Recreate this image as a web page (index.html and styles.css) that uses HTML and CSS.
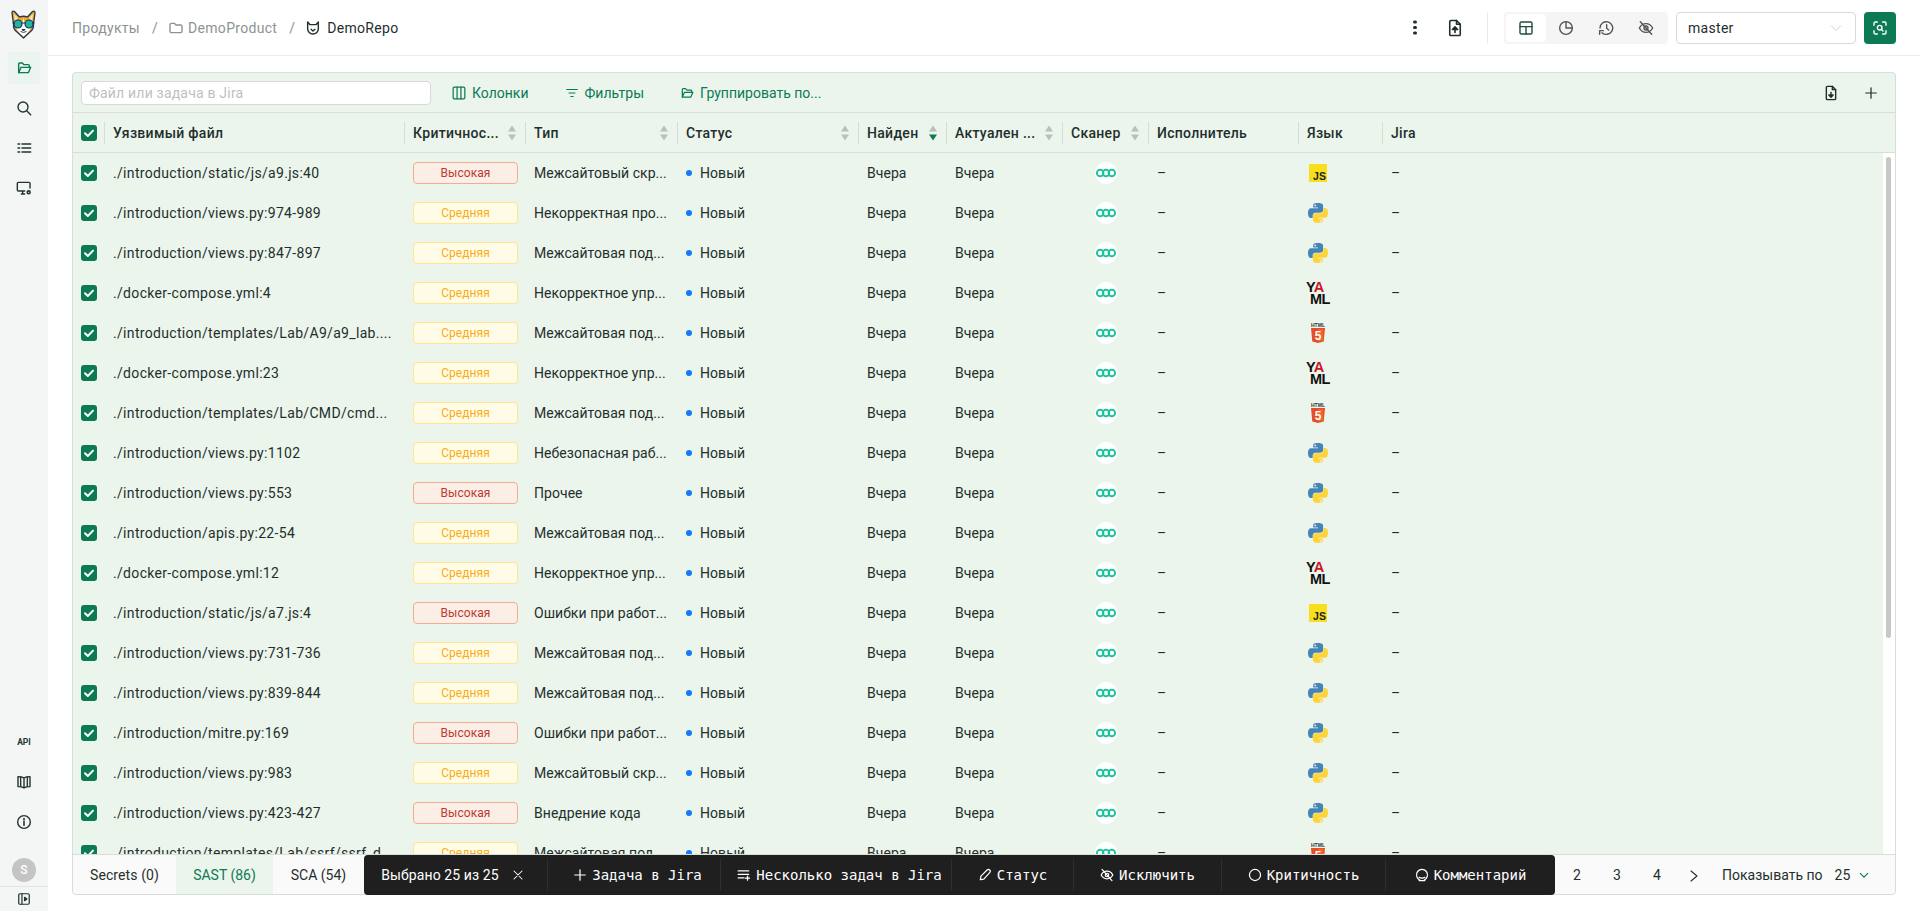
FILE: index.html
```html
<!DOCTYPE html>
<html lang="ru">
<head>
<meta charset="utf-8">
<title>DemoRepo</title>
<link rel="stylesheet" href="styles.css">
</head>
<body>
<svg class="defs" aria-hidden="true">
  <symbol id="i-check" viewBox="0 0 16 16"><path d="M4 8.300l2.800 2.700L12 5.600" fill="none" stroke="#fff" stroke-width="2" stroke-linecap="round" stroke-linejoin="round"/></symbol>
  <symbol id="i-scan" viewBox="0 0 24 24"><circle cx="12" cy="12" r="11" fill="#fff"/><g fill="none" stroke="#20c49b" stroke-width="1.900"><circle cx="6.200" cy="12" r="3.300"/><circle cx="12" cy="12" r="3.300"/><circle cx="17.800" cy="12" r="3.300"/></g></symbol>
  <symbol id="i-py" viewBox="0 0 24 24"><path fill="#4584b6" d="M11.900 2C6.900 2 7.200 4.200 7.200 4.200v2.300h4.800v.7H5.300S2 6.800 2 12s2.900 5 2.900 5h1.800v-2.400s-.1-2.900 2.900-2.900h4.800s2.700 0 2.700-2.600V4.700S17.500 2 11.900 2zM9.300 3.500a.9.9 0 1 1 0 1.800.9.9 0 0 1 0-1.800z"/><path fill="#ffd43b" d="M12.100 22c5 0 4.700-2.200 4.700-2.200v-2.300H12v-.7h6.700S22 17.200 22 12s-2.900-5-2.900-5h-1.800v2.400s.1 2.900-2.900 2.900H9.600s-2.700 0-2.700 2.600v4.400S6.500 22 12.100 22zm2.600-1.500a.9.9 0 1 1 0-1.800.9.9 0 0 1 0 1.800z"/></symbol>
  <symbol id="i-shield" viewBox="0 0 24 24"><path fill="#e44d26" d="M5 7h14l-1.300 13.500L12 22l-5.700-1.500z"/><path fill="#f16529" d="M12 8.100v12.800l4.600-1.200 1.100-11.600z"/></symbol>
  <symbol id="i-sort" viewBox="0 0 10 16"><path d="M5 0.500l4 6H1z" fill="#b9c0bb"/><path d="M5 15.500l-4-6h8z" fill="#b9c0bb"/></symbol>
  <symbol id="i-sort-d" viewBox="0 0 10 16"><path d="M5 0.500l4 6H1z" fill="#b9c0bb"/><path d="M5 15.500l-4-6h8z" fill="#0b7a55"/></symbol>
  <symbol id="i-book" viewBox="0 0 24 24"><path d="M12 6c-2-1.500-5-2-9-2v15c4 0 7 .5 9 2 2-1.500 5-2 9-2V4c-4 0-7 .5-9 2zM12 6v15M7 4.300v15M17 4.300v15"/></symbol>
  <symbol id="i-folder-open" viewBox="0 0 24 24"><path d="M4 19V6a1.500 1.500 0 0 1 1.500-1.500h4l2.500 2.500h6.500A1.500 1.500 0 0 1 20 8.500V11"/><path d="M4 19h14.500L22 11H7.500z"/></symbol>
  <symbol id="i-folder" viewBox="0 0 24 24"><path d="M3 7a2 2 0 0 1 2-2h4.500l2.500 2.500h7a2 2 0 0 1 2 2V17a2 2 0 0 1-2 2H5a2 2 0 0 1-2-2z"/></symbol>
  <symbol id="i-search" viewBox="0 0 24 24"><circle cx="10.500" cy="10.500" r="7.500"/><path d="M16 16l6 6"/></symbol>
  <symbol id="i-list" viewBox="0 0 24 24"><path d="M3 6h2.500M3 12h2.500M3 18h2.500M9 6h13M9 12h13M9 18h13" stroke-width="2.200"/></symbol>
  <symbol id="i-mon" viewBox="0 0 24 24"><path d="M21 12V5a1.500 1.500 0 0 0-1.500-1.500h-16A1.500 1.500 0 0 0 2 5v10a1.500 1.500 0 0 0 1.500 1.500H13M8 21h5M10 16.500V21"/><circle cx="19" cy="18.500" r="2.200" stroke-width="2.400"/></symbol>
  <symbol id="i-info" viewBox="0 0 24 24"><circle cx="12" cy="12" r="9.500"/><path d="M12 11v6M12 7v1.500" stroke-width="2.400"/></symbol>
  <symbol id="i-side" viewBox="0 0 24 24"><rect x="3" y="3" width="18" height="18" rx="2"/><path d="M8.500 3v18"/><path d="M13 9l4 3-4 3z" fill="currentColor"/></symbol>
  <symbol id="i-file-up" viewBox="0 0 24 24"><path d="M14 2H6.500A1.500 1.500 0 0 0 5 3.500v17A1.500 1.500 0 0 0 6.500 22h11a1.500 1.500 0 0 0 1.500-1.500V7z"/><path d="M14 2v5h5"/><path d="M12 18v-6" stroke-width="2.200"/><path d="M8.500 14l3.500-3.500 3.500 3.500z" fill="currentColor"/></symbol>
  <symbol id="i-file-down" viewBox="0 0 24 24"><path d="M14 2H6.500A1.500 1.500 0 0 0 5 3.500v17A1.500 1.500 0 0 0 6.500 22h11a1.500 1.500 0 0 0 1.500-1.500V7z"/><path d="M14 2v5h5"/><path d="M12 11v5" stroke-width="2"/><path d="M8.800 15l3.200 3.200 3.200-3.200z" fill="currentColor"/></symbol>
  <symbol id="i-table" viewBox="0 0 24 24"><rect x="3" y="3" width="18" height="18" rx="2"/><path d="M3 10h18M12 10v11"/></symbol>
  <symbol id="i-pie" viewBox="0 0 24 24"><circle cx="12" cy="12" r="9.500"/><path d="M12 2.500V12h9.500"/></symbol>
  <symbol id="i-hist" viewBox="0 0 24 24"><path d="M3 12a9.500 9.500 0 1 1 3 7"/><path d="M2.500 21.500v-5.500H8"/><path d="M13 7v5.500l3 2.500"/></symbol>
  <symbol id="i-eye-off" viewBox="0 0 24 24"><path d="M2 12s3.500-6.500 10-6.500S22 12 22 12s-3.500 6.500-10 6.500S2 12 2 12z"/><circle cx="12" cy="12" r="3"/><path d="M3.500 2.500l17 19"/></symbol>
  <symbol id="i-chev" viewBox="0 0 24 24"><path d="M3 8l9 9 9-9"/></symbol>
  <symbol id="i-chev-r" viewBox="0 0 24 24"><path d="M6 2l12 10L6 22"/></symbol>
  <symbol id="i-scanbtn" viewBox="0 0 24 24"><path d="M3 8V5a2 2 0 0 1 2-2h3M16 3h3a2 2 0 0 1 2 2v3M21 16v3a2 2 0 0 1-2 2h-3M8 21H5a2 2 0 0 1-2-2v-3"/><circle cx="11.500" cy="11.500" r="3.500"/><path d="M14 14l2.500 2.500"/></symbol>
  <symbol id="i-cols" viewBox="0 0 24 24"><rect x="2" y="2" width="20" height="20" rx="2"/><path d="M8.700 2v20M15.300 2v20"/></symbol>
  <symbol id="i-filter" viewBox="0 0 24 24"><path d="M3 6h18M7 12h10M10 18h4"/></symbol>
  <symbol id="i-plus" viewBox="0 0 24 24"><path d="M12 3v18M3 12h18"/></symbol>
  <symbol id="i-x" viewBox="0 0 24 24"><path d="M4 4l16 16M20 4L4 20"/></symbol>
  <symbol id="i-multi" viewBox="0 0 24 24"><path d="M2 5h18M2 11h18M2 17h10M18 14v7M14.500 17.500h7"/></symbol>
  <symbol id="i-pen" viewBox="0 0 24 24"><path d="M4 20l1-6L15.500 3.500a3 3 0 0 1 4.500 4.500L10 19z"/></symbol>
  <symbol id="i-circle" viewBox="0 0 24 24"><circle cx="12" cy="12" r="9.500"/></symbol>
  <symbol id="i-comment" viewBox="0 0 24 24"><path d="M8 20.500A9.500 9.500 0 1 1 16 20.500"/><path d="M7 16c2.500 2 7.500 2 10 0"/><path d="M7 21.500h10"/></symbol>
  <symbol id="i-repo" viewBox="0 0 24 24"><path d="M4 3l3.500 4h9L20 3v10c0 4.500-3.500 8-8 8s-8-3.500-8-8z"/><path d="M9 14l3 2.500 3-2.500"/></symbol>
</svg>

<div class="app">
  <aside class="side">
    <div class="logo">
      <svg class="logo-svg" viewBox="0 0 27 29">
        <path d="M3.500 14L2 3Q2 .5 4.500 1.500L9.500 7Q13.500 5.500 17.500 7L22.500 1.500Q25 .5 25 3L23.500 14Q24 19 20 22L13.500 28 7 22Q3 19 3.500 14z" fill="#f6a623" stroke="#1c3a5e" stroke-width="1.300" stroke-linejoin="round"/>
        <path d="M4 4l4 4-3 4zM23 4l-4 4 3 4z" fill="#fbe3c0"/>
        <path d="M13.500 8L15 15l6 2.500q-1 3.500-7.500 9Q7 21 6 17.500L12 15z" fill="#fff"/>
        <circle cx="8" cy="14" r="4" fill="#1fb5a6" stroke="#17304f" stroke-width="1.100"/>
        <circle cx="19" cy="14" r="4" fill="#1fb5a6" stroke="#17304f" stroke-width="1.100"/>
        <path d="M11.500 13h4M2.500 13h2M22.500 13h2" stroke="#17304f" stroke-width="1.100"/>
        <path d="M12 19.500h3l-1.500 1.500z" fill="#17304f" stroke="#17304f"/>
        <path d="M10.500 21.500q3 1.800 6 0" fill="none" stroke="#17304f" stroke-width=".9"/>
      </svg>
    </div>
    <nav class="nav">
      <a class="nav-i nav-on"><svg class="ic ic16"><use href="#i-folder-open"/></svg></a>
      <a class="nav-i"><svg class="ic ic16"><use href="#i-search"/></svg></a>
      <a class="nav-i"><svg class="ic ic16"><use href="#i-list"/></svg></a>
      <a class="nav-i"><svg class="ic ic16"><use href="#i-mon"/></svg></a>
    </nav>
    <nav class="nav nav-b">
      <a class="nav-i api">API</a>
      <a class="nav-i"><svg class="ic ic16"><use href="#i-book"/></svg></a>
      <a class="nav-i"><svg class="ic ic16"><use href="#i-info"/></svg></a>
    </nav>
    <div class="avatar">S</div>
    <div class="collapse"><svg class="ic ic14"><use href="#i-side"/></svg></div>
  </aside>

  <div class="page">
    <header class="top">
      <div class="crumbs">
        <span class="crumb">Продукты</span>
        <span class="sep">/</span>
        <span class="crumb"><svg class="ic ic16"><use href="#i-folder"/></svg>DemoProduct</span>
        <span class="sep">/</span>
        <span class="crumb crumb-on"><svg class="ic ic16"><use href="#i-repo"/></svg>DemoRepo</span>
      </div>
      <div class="top-r">
        <button class="ib"><span class="kebab"></span></button>
        <button class="ib"><svg class="ic ic18"><use href="#i-file-up"/></svg></button>
        <span class="vr"></span>
        <div class="seg">
          <span class="seg-i seg-on"><svg class="ic ic16"><use href="#i-table"/></svg></span>
          <span class="seg-i"><svg class="ic ic16"><use href="#i-pie"/></svg></span>
          <span class="seg-i"><svg class="ic ic16"><use href="#i-hist"/></svg></span>
          <span class="seg-i"><svg class="ic ic16"><use href="#i-eye-off"/></svg></span>
        </div>
        <div class="select">master<svg class="ic ic12"><use href="#i-chev"/></svg></div>
        <button class="go"><svg class="ic ic16"><use href="#i-scanbtn"/></svg></button>
      </div>
    </header>

    <main class="main">
      <section class="card">
        <div class="tools">
          <input class="search" placeholder="Файл или задача в Jira">
          <span class="tb"><svg class="ic ic14"><use href="#i-cols"/></svg>Колонки</span>
          <span class="tb"><svg class="ic ic14"><use href="#i-filter"/></svg>Фильтры</span>
          <span class="tb"><svg class="ic ic14"><use href="#i-folder-open"/></svg>Группировать по...</span>
          <span class="tools-r">
            <button class="ib"><svg class="ic ic16"><use href="#i-file-down"/></svg></button>
            <button class="ib"><svg class="ic ic14"><use href="#i-plus"/></svg></button>
          </span>
        </div>

        <div class="grid thead">
          <span class="cb-c"><span class="cb"><svg><use href="#i-check"/></svg></span></span>
          <span class="th">Уязвимый файл</span>
          <span class="th">Критичнос...<svg class="sort"><use href="#i-sort"/></svg></span>
          <span class="th">Тип<svg class="sort"><use href="#i-sort"/></svg></span>
          <span class="th">Статус<svg class="sort"><use href="#i-sort"/></svg></span>
          <span class="th">Найден<svg class="sort"><use href="#i-sort-d"/></svg></span>
          <span class="th">Актуален ...<svg class="sort"><use href="#i-sort"/></svg></span>
          <span class="th">Сканер<svg class="sort"><use href="#i-sort"/></svg></span>
          <span class="th">Исполнитель</span>
          <span class="th">Язык</span>
          <span class="th">Jira</span>
        </div>

        <div class="tbody">
          <div class="rows">
            <div class="grid row"><span class="cb-c"><span class="cb"><svg><use href="#i-check"/></svg></span></span><span class="td td-f">./introduction/static/js/a9.js:40</span><span class="td"><span class="sev high">Высокая</span></span><span class="td">Межсайтовый скр...</span><span class="td"><i class="dot"></i>Новый</span><span class="td">Вчера</span><span class="td">Вчера</span><span class="td td-c"><svg class="logo24"><use href="#i-scan"/></svg></span><span class="td">–</span><span class="td td-l"><span class="lg-js">JS</span></span><span class="td">–</span></div>
            <div class="grid row"><span class="cb-c"><span class="cb"><svg><use href="#i-check"/></svg></span></span><span class="td td-f">./introduction/views.py:974-989</span><span class="td"><span class="sev mid">Средняя</span></span><span class="td">Некорректная про...</span><span class="td"><i class="dot"></i>Новый</span><span class="td">Вчера</span><span class="td">Вчера</span><span class="td td-c"><svg class="logo24"><use href="#i-scan"/></svg></span><span class="td">–</span><span class="td td-l"><svg class="logo24"><use href="#i-py"/></svg></span><span class="td">–</span></div>
            <div class="grid row"><span class="cb-c"><span class="cb"><svg><use href="#i-check"/></svg></span></span><span class="td td-f">./introduction/views.py:847-897</span><span class="td"><span class="sev mid">Средняя</span></span><span class="td">Межсайтовая под...</span><span class="td"><i class="dot"></i>Новый</span><span class="td">Вчера</span><span class="td">Вчера</span><span class="td td-c"><svg class="logo24"><use href="#i-scan"/></svg></span><span class="td">–</span><span class="td td-l"><svg class="logo24"><use href="#i-py"/></svg></span><span class="td">–</span></div>
            <div class="grid row"><span class="cb-c"><span class="cb"><svg><use href="#i-check"/></svg></span></span><span class="td td-f">./docker-compose.yml:4</span><span class="td"><span class="sev mid">Средняя</span></span><span class="td">Некорректное упр...</span><span class="td"><i class="dot"></i>Новый</span><span class="td">Вчера</span><span class="td">Вчера</span><span class="td td-c"><svg class="logo24"><use href="#i-scan"/></svg></span><span class="td">–</span><span class="td td-l"><span class="lg-yaml"><span>Y<b>A</b></span><span class="ml">ML</span></span></span><span class="td">–</span></div>
            <div class="grid row"><span class="cb-c"><span class="cb"><svg><use href="#i-check"/></svg></span></span><span class="td td-f">./introduction/templates/Lab/A9/a9_lab....</span><span class="td"><span class="sev mid">Средняя</span></span><span class="td">Межсайтовая под...</span><span class="td"><i class="dot"></i>Новый</span><span class="td">Вчера</span><span class="td">Вчера</span><span class="td td-c"><svg class="logo24"><use href="#i-scan"/></svg></span><span class="td">–</span><span class="td td-l"><span class="lg-html"><span class="h-t">HTML</span><span class="h-s"><svg class="h-b"><use href="#i-shield"/></svg><span class="h-5">5</span></span></span></span><span class="td">–</span></div>
            <div class="grid row"><span class="cb-c"><span class="cb"><svg><use href="#i-check"/></svg></span></span><span class="td td-f">./docker-compose.yml:23</span><span class="td"><span class="sev mid">Средняя</span></span><span class="td">Некорректное упр...</span><span class="td"><i class="dot"></i>Новый</span><span class="td">Вчера</span><span class="td">Вчера</span><span class="td td-c"><svg class="logo24"><use href="#i-scan"/></svg></span><span class="td">–</span><span class="td td-l"><span class="lg-yaml"><span>Y<b>A</b></span><span class="ml">ML</span></span></span><span class="td">–</span></div>
            <div class="grid row"><span class="cb-c"><span class="cb"><svg><use href="#i-check"/></svg></span></span><span class="td td-f">./introduction/templates/Lab/CMD/cmd...</span><span class="td"><span class="sev mid">Средняя</span></span><span class="td">Межсайтовая под...</span><span class="td"><i class="dot"></i>Новый</span><span class="td">Вчера</span><span class="td">Вчера</span><span class="td td-c"><svg class="logo24"><use href="#i-scan"/></svg></span><span class="td">–</span><span class="td td-l"><span class="lg-html"><span class="h-t">HTML</span><span class="h-s"><svg class="h-b"><use href="#i-shield"/></svg><span class="h-5">5</span></span></span></span><span class="td">–</span></div>
            <div class="grid row"><span class="cb-c"><span class="cb"><svg><use href="#i-check"/></svg></span></span><span class="td td-f">./introduction/views.py:1102</span><span class="td"><span class="sev mid">Средняя</span></span><span class="td">Небезопасная раб...</span><span class="td"><i class="dot"></i>Новый</span><span class="td">Вчера</span><span class="td">Вчера</span><span class="td td-c"><svg class="logo24"><use href="#i-scan"/></svg></span><span class="td">–</span><span class="td td-l"><svg class="logo24"><use href="#i-py"/></svg></span><span class="td">–</span></div>
            <div class="grid row"><span class="cb-c"><span class="cb"><svg><use href="#i-check"/></svg></span></span><span class="td td-f">./introduction/views.py:553</span><span class="td"><span class="sev high">Высокая</span></span><span class="td">Прочее</span><span class="td"><i class="dot"></i>Новый</span><span class="td">Вчера</span><span class="td">Вчера</span><span class="td td-c"><svg class="logo24"><use href="#i-scan"/></svg></span><span class="td">–</span><span class="td td-l"><svg class="logo24"><use href="#i-py"/></svg></span><span class="td">–</span></div>
            <div class="grid row"><span class="cb-c"><span class="cb"><svg><use href="#i-check"/></svg></span></span><span class="td td-f">./introduction/apis.py:22-54</span><span class="td"><span class="sev mid">Средняя</span></span><span class="td">Межсайтовая под...</span><span class="td"><i class="dot"></i>Новый</span><span class="td">Вчера</span><span class="td">Вчера</span><span class="td td-c"><svg class="logo24"><use href="#i-scan"/></svg></span><span class="td">–</span><span class="td td-l"><svg class="logo24"><use href="#i-py"/></svg></span><span class="td">–</span></div>
            <div class="grid row"><span class="cb-c"><span class="cb"><svg><use href="#i-check"/></svg></span></span><span class="td td-f">./docker-compose.yml:12</span><span class="td"><span class="sev mid">Средняя</span></span><span class="td">Некорректное упр...</span><span class="td"><i class="dot"></i>Новый</span><span class="td">Вчера</span><span class="td">Вчера</span><span class="td td-c"><svg class="logo24"><use href="#i-scan"/></svg></span><span class="td">–</span><span class="td td-l"><span class="lg-yaml"><span>Y<b>A</b></span><span class="ml">ML</span></span></span><span class="td">–</span></div>
            <div class="grid row"><span class="cb-c"><span class="cb"><svg><use href="#i-check"/></svg></span></span><span class="td td-f">./introduction/static/js/a7.js:4</span><span class="td"><span class="sev high">Высокая</span></span><span class="td">Ошибки при работ...</span><span class="td"><i class="dot"></i>Новый</span><span class="td">Вчера</span><span class="td">Вчера</span><span class="td td-c"><svg class="logo24"><use href="#i-scan"/></svg></span><span class="td">–</span><span class="td td-l"><span class="lg-js">JS</span></span><span class="td">–</span></div>
            <div class="grid row"><span class="cb-c"><span class="cb"><svg><use href="#i-check"/></svg></span></span><span class="td td-f">./introduction/views.py:731-736</span><span class="td"><span class="sev mid">Средняя</span></span><span class="td">Межсайтовая под...</span><span class="td"><i class="dot"></i>Новый</span><span class="td">Вчера</span><span class="td">Вчера</span><span class="td td-c"><svg class="logo24"><use href="#i-scan"/></svg></span><span class="td">–</span><span class="td td-l"><svg class="logo24"><use href="#i-py"/></svg></span><span class="td">–</span></div>
            <div class="grid row"><span class="cb-c"><span class="cb"><svg><use href="#i-check"/></svg></span></span><span class="td td-f">./introduction/views.py:839-844</span><span class="td"><span class="sev mid">Средняя</span></span><span class="td">Межсайтовая под...</span><span class="td"><i class="dot"></i>Новый</span><span class="td">Вчера</span><span class="td">Вчера</span><span class="td td-c"><svg class="logo24"><use href="#i-scan"/></svg></span><span class="td">–</span><span class="td td-l"><svg class="logo24"><use href="#i-py"/></svg></span><span class="td">–</span></div>
            <div class="grid row"><span class="cb-c"><span class="cb"><svg><use href="#i-check"/></svg></span></span><span class="td td-f">./introduction/mitre.py:169</span><span class="td"><span class="sev high">Высокая</span></span><span class="td">Ошибки при работ...</span><span class="td"><i class="dot"></i>Новый</span><span class="td">Вчера</span><span class="td">Вчера</span><span class="td td-c"><svg class="logo24"><use href="#i-scan"/></svg></span><span class="td">–</span><span class="td td-l"><svg class="logo24"><use href="#i-py"/></svg></span><span class="td">–</span></div>
            <div class="grid row"><span class="cb-c"><span class="cb"><svg><use href="#i-check"/></svg></span></span><span class="td td-f">./introduction/views.py:983</span><span class="td"><span class="sev mid">Средняя</span></span><span class="td">Межсайтовый скр...</span><span class="td"><i class="dot"></i>Новый</span><span class="td">Вчера</span><span class="td">Вчера</span><span class="td td-c"><svg class="logo24"><use href="#i-scan"/></svg></span><span class="td">–</span><span class="td td-l"><svg class="logo24"><use href="#i-py"/></svg></span><span class="td">–</span></div>
            <div class="grid row"><span class="cb-c"><span class="cb"><svg><use href="#i-check"/></svg></span></span><span class="td td-f">./introduction/views.py:423-427</span><span class="td"><span class="sev high">Высокая</span></span><span class="td">Внедрение кода</span><span class="td"><i class="dot"></i>Новый</span><span class="td">Вчера</span><span class="td">Вчера</span><span class="td td-c"><svg class="logo24"><use href="#i-scan"/></svg></span><span class="td">–</span><span class="td td-l"><svg class="logo24"><use href="#i-py"/></svg></span><span class="td">–</span></div>
            <div class="grid row"><span class="cb-c"><span class="cb"><svg><use href="#i-check"/></svg></span></span><span class="td td-f">./introduction/templates/Lab/ssrf/ssrf_d...</span><span class="td"><span class="sev mid">Средняя</span></span><span class="td">Межсайтовая под...</span><span class="td"><i class="dot"></i>Новый</span><span class="td">Вчера</span><span class="td">Вчера</span><span class="td td-c"><svg class="logo24"><use href="#i-scan"/></svg></span><span class="td">–</span><span class="td td-l"><span class="lg-html"><span class="h-t">HTML</span><span class="h-s"><svg class="h-b"><use href="#i-shield"/></svg><span class="h-5">5</span></span></span></span><span class="td">–</span></div>
          </div>
          <div class="vbar"><span class="thumb"></span></div>
        </div>

        <footer class="foot">
          <div class="tabs">
            <span class="tab tab-1">Secrets (0)</span>
            <span class="tab tab-2 tab-on">SAST (86)</span>
            <span class="tab tab-3">SCA (54)</span>
          </div>
          <div class="bar">
            <span class="bs bs-first">Выбрано 25 из 25<svg class="ic ic12 bx"><use href="#i-x"/></svg></span>
            <span class="bs bs-sh"><svg class="ic ic14"><use href="#i-plus"/></svg>Задача в Jira</span>
            <span class="bs bs-sh"><svg class="ic ic14"><use href="#i-multi"/></svg>Несколько задач в Jira</span>
            <span class="bs"><svg class="ic ic14"><use href="#i-pen"/></svg>Статус</span>
            <span class="bs"><svg class="ic ic14"><use href="#i-eye-off"/></svg>Исключить</span>
            <span class="bs"><svg class="ic ic14"><use href="#i-circle"/></svg>Критичность</span>
            <span class="bs"><svg class="ic ic14"><use href="#i-comment"/></svg>Комментарий</span>
          </div>
          <div class="pager">
            <span class="pg">2</span>
            <span class="pg">3</span>
            <span class="pg">4</span>
            <span class="pg-n"><svg class="ic ic12"><use href="#i-chev-r"/></svg></span>
            <span class="per">Показывать по</span>
            <span class="per-v">25<svg class="ic ic10"><use href="#i-chev"/></svg></span>
          </div>
        </footer>
      </section>
    </main>
  </div>
</div>
</body>
</html>
```

FILE: styles.css
```css
* { box-sizing: border-box; }
html, body { margin: 0; height: 100%; overflow: hidden; }
body {
  font-family: Roboto, "Noto Sans", sans-serif;
  font-size: 14px;
  color: #1f2f2c;
  background: #fff;
}
.defs { width: 0; height: 0; position: absolute; }

.ic { fill: none; stroke: currentColor; stroke-width: 2.1; stroke-linecap: round; stroke-linejoin: round; flex: none; }
.ic10 { width: 10px; height: 10px; }
.ic12 { width: 12px; height: 12px; }
.ic14 { width: 14px; height: 14px; }
.ic16 { width: 16px; height: 16px; }
.ic18 { width: 18px; height: 18px; }
.logo24 { width: 24px; height: 24px; flex: none; }

/* language logos */
.lg-js { width: 18px; height: 18px; margin-left: 3px; background: #f7df1e; color: #222; font: 700 10.5px/1 "Liberation Sans", sans-serif; display: flex; align-items: flex-end; justify-content: flex-end; padding: 0 1px 1px 0; }
.lg-yaml { width: 24px; height: 24px; display: flex; flex-direction: column; color: #111; font: 700 14.5px/11.5px "Liberation Sans", sans-serif; letter-spacing: -.6px; padding-top: 1px; }
.lg-yaml b { color: #cb171e; font-weight: 700; }
.lg-yaml .ml { padding-left: 4px; }
.lg-html { width: 24px; height: 24px; display: flex; flex-direction: column; align-items: center; }
.h-t { font: 700 5px/6px "Liberation Sans", sans-serif; color: #333; height: 6px; margin-top: 1px; }
.h-s { position: relative; width: 24px; height: 17px; display: flex; justify-content: center; }
.h-b { width: 24px; height: 24px; margin-top: -7px; flex: none; }
.h-5 { position: absolute; left: 0; right: 0; top: 2px; text-align: center; color: #fff; font: 700 12px/13px "Liberation Sans", sans-serif; }

.app { display: flex; height: 911px; }

/* sidebar */
.side { width: 48px; flex: none; background: #f3f6f4; display: flex; flex-direction: column; }
.logo { height: 52px; padding: 10px 0 0 10px; }
.logo-svg { width: 27px; height: 29px; display: block; }
.nav { display: flex; flex-direction: column; gap: 8px; padding: 0 8px; }
.nav-b { margin-top: auto; }
.nav-i { width: 32px; height: 32px; border-radius: 4px; display: flex; align-items: center; justify-content: center; color: #22352f; }
.nav-on { background: #e9f5ee; color: #0b7a55; }
.api { font: 700 8.5px Roboto, sans-serif; }
.avatar { width: 24px; height: 24px; margin: 20px 12px 4px; border-radius: 50%; background: #c4c4c4; color: #fff; font-size: 12px; font-weight: 500; display: flex; align-items: center; justify-content: center; }
.collapse { height: 25px; border-top: 1px solid #dfe3e1; display: flex; align-items: center; justify-content: center; color: #22352f; }

/* header */
.page { flex: 1; min-width: 0; display: flex; flex-direction: column; }
.top { height: 56px; flex: none; border-bottom: 1px solid #eaeaea; display: flex; align-items: center; justify-content: space-between; padding: 0 24px; }
.crumbs { display: flex; align-items: center; letter-spacing: .3px; color: #8d9391; }
.crumb { display: flex; align-items: center; gap: 4px; }
.crumb-on { color: #1f2f2c; gap: 6px; }
.sep { margin: 0 10px 0 12px; }
.top-r { display: flex; align-items: center; }
.ib { width: 40px; height: 32px; padding: 0; border: 0; background: none; color: #1f2f2c; display: flex; align-items: center; justify-content: center; }
.kebab { width: 3.500px; height: 3.500px; border-radius: 50%; background: #1f2f2c; box-shadow: 0 -5.500px 0 #1f2f2c, 0 5.500px 0 #1f2f2c; }
.vr { width: 1px; height: 32px; background: #eaeaea; margin: 0 16px 0 12px; }
.seg { display: flex; height: 32px; padding: 2px; border-radius: 4px; background: #f5f5f5; }
.seg-i { width: 40px; display: flex; align-items: center; justify-content: center; color: #555; border-radius: 4px; }
.seg-on { background: #fff; color: #1e4d3f; }
.select { width: 180px; height: 32px; margin: 0 8px; padding: 0 13px 0 11px; border: 1px solid #d9d9d9; border-radius: 4px; display: flex; align-items: center; justify-content: space-between; font-size: 14px; letter-spacing: .3px; }
.select .ic { color: #c4c4c4; stroke-width: 1.600; }
.go { width: 32px; height: 32px; padding: 0; border: 0; border-radius: 4px; background: #0b7a55; color: #fff; display: flex; align-items: center; justify-content: center; }

/* card */
.main { flex: 1; min-height: 0; padding: 16px 24px; }
.card { height: 100%; border: 1px solid #d9dedb; border-radius: 4px; display: flex; flex-direction: column; background: #ebf5ec; }
.tools { height: 40px; flex: none; display: flex; align-items: center; padding: 0 4px 0 8px; border-bottom: 1px solid #d9dedb; }
.search { width: 350px; height: 24px; padding: 0 7px; border: 1px solid #d9d9d9; border-radius: 4px; background: #fff; font: 14px Roboto, sans-serif; letter-spacing: .2px; margin-right: 3px; outline: 0; }
.search::placeholder { color: #bfbfbf; opacity: 1; }
.tb { display: flex; align-items: center; gap: 6px; padding: 0 18px; color: #0b7a55; }
.tb:last-of-type { letter-spacing: .15px; }
.tools-r { margin-left: auto; display: flex; }

.grid { display: grid; grid-template-columns: 31px 300px 121px 152px 181px 88px 116px 86px 150px 84px 1fr; align-items: center; }
.thead { height: 40px; flex: none; border-bottom: 1px solid #d9dedb; }
.cb-c { display: flex; padding-left: 8px; }
.cb { width: 16px; height: 16px; border-radius: 3px; background: #0b7a55; display: block; }
.cb svg { width: 16px; height: 16px; display: block; }
.th { height: 22px; border-left: 1px solid #d6dcd8; padding: 0 8px; display: flex; align-items: center; justify-content: space-between; font-weight: 500; white-space: nowrap; letter-spacing: .3px; }
.sort { width: 10px; height: 16px; flex: none; }

.tbody { flex: 1; min-height: 0; display: flex; overflow: hidden; }
.rows { flex: 1; min-width: 0; }
.row { height: 40px; }
.td { padding-left: 9px; white-space: nowrap; overflow: hidden; display: flex; align-items: center; letter-spacing: .05px; height: 40px; }
.td-f { letter-spacing: .32px; }
.td-c { padding-left: 1px; justify-content: center; }
.td-l { padding-left: 8px; }
.sev { width: 105px; height: 22px; border: 1px solid; border-radius: 4px; display: flex; align-items: center; justify-content: center; font-size: 12px; }
.high { background: #faeee7; border-color: #f6ab8e; color: #c0392b; }
.mid { background: #fffbe6; border-color: #ffe58f; color: #faad14; }
.dot { width: 6px; height: 6px; border-radius: 50%; background: #1677ff; margin-right: 8px; flex: none; }
.vbar { width: 12px; flex: none; background: #fff; padding: 4px 4px 0 3px; }
.thumb { display: block; height: 481px; border-radius: 3px; background: #c8c8c8; }

/* footer */
.foot { height: 40px; flex: none; display: flex; border-top: 1px solid #d9dedb; background: #fafafa; border-radius: 0 0 4px 4px; }
.tabs { display: flex; flex: none; }
.tab { display: flex; align-items: center; justify-content: center; }
.tab-1 { width: 103px; letter-spacing: .1px; }
.tab-2 { width: 97px; }
.tab-3 { width: 91px; }
.tab-on { background: #ebf5ec; color: #0b7a55; }
.bar { width: 1191px; height: 40px; flex: none; display: grid; grid-template-columns: 183px 173px 231px 122px 148px 164px 170px; align-items: center; background: #1f1f1f; border-radius: 4px; color: #fff; font-family: "DejaVu Sans Mono", monospace; font-size: 14px; }
.bs { height: 32px; display: flex; align-items: center; justify-content: center; gap: 5px; border-left: 1px solid #2f2f2f; white-space: nowrap; }
.bs-first { border-left: 0; font-family: Roboto, sans-serif; gap: 13px; letter-spacing: .1px; padding-right: 6px; }
.bs-sh { padding-left: 7px; }
.pager { display: flex; align-items: center; margin-left: 2px; }
.pg { width: 40px; text-align: center; }
.pg-n { width: 34px; display: flex; justify-content: center; padding-top: 2px; }
.per { margin: 0 0 0 11px; }
.per-v { display: flex; align-items: center; gap: 9px; margin-left: 12px; }
.per-v .ic { color: #0b7a55; stroke-width: 2.800; }
```
